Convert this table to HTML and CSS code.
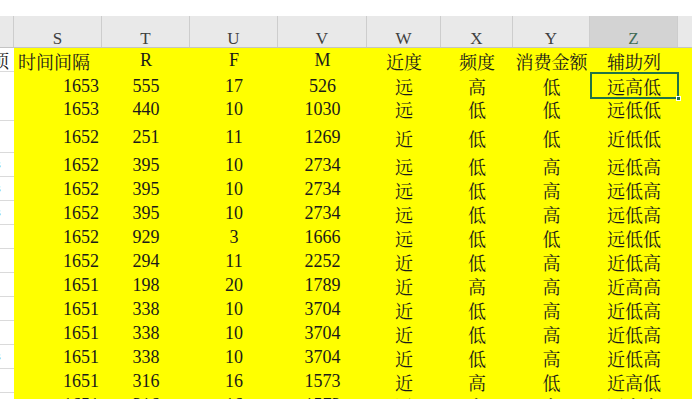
FILE: index.html
```html
<!DOCTYPE html>
<html lang="zh">
<head>
<meta charset="utf-8">
<link rel="stylesheet" href="styles.css">
</head>
<body>
<div class="topbar"></div>
<div class="sheet">
  <div class="row hd">
    <div class="h"></div>
    <div class="h">S</div><div class="h">T</div><div class="h">U</div><div class="h">V</div>
    <div class="h">W</div><div class="h">X</div><div class="h">Y</div><div class="h sel">Z</div><div class="h last"></div>
  </div>
  <div class="row">
    <div class="g"><span class="clip">项</span></div>
    <div class="c l">时间间隔</div><div class="c">R</div><div class="c">F</div><div class="c">M</div>
    <div class="c">近度</div><div class="c">频度</div><div class="c">消费金额</div><div class="c">辅助列</div><div class="c"></div>
  </div>
  <div class="row">
    <div class="g"></div>
    <div class="c r">1653</div><div class="c">555</div><div class="c">17</div><div class="c">526</div>
    <div class="c">远</div><div class="c">高</div><div class="c">低</div><div class="c active">远高低</div><div class="c"></div>
  </div>
  <div class="row r25">
    <div class="g"></div>
    <div class="c r">1653</div><div class="c">440</div><div class="c">10</div><div class="c">1030</div>
    <div class="c">远</div><div class="c">低</div><div class="c">低</div><div class="c">远低低</div><div class="c"></div>
  </div>
  <div class="row tall">
    <div class="g"></div>
    <div class="c r">1652</div><div class="c">251</div><div class="c">11</div><div class="c">1269</div>
    <div class="c">近</div><div class="c">低</div><div class="c">低</div><div class="c">近低低</div><div class="c"></div>
  </div>
  <div class="row">
    <div class="g"><span class="clip2">s</span></div>
    <div class="c r">1652</div><div class="c">395</div><div class="c">10</div><div class="c">2734</div>
    <div class="c">远</div><div class="c">低</div><div class="c">高</div><div class="c">远低高</div><div class="c"></div>
  </div>
  <div class="row">
    <div class="g"><span class="clip2">s</span></div>
    <div class="c r">1652</div><div class="c">395</div><div class="c">10</div><div class="c">2734</div>
    <div class="c">远</div><div class="c">低</div><div class="c">高</div><div class="c">远低高</div><div class="c"></div>
  </div>
  <div class="row">
    <div class="g"><span class="clip2">s</span></div>
    <div class="c r">1652</div><div class="c">395</div><div class="c">10</div><div class="c">2734</div>
    <div class="c">远</div><div class="c">低</div><div class="c">高</div><div class="c">远低高</div><div class="c"></div>
  </div>
  <div class="row">
    <div class="g"></div>
    <div class="c r">1652</div><div class="c">929</div><div class="c">3</div><div class="c">1666</div>
    <div class="c">远</div><div class="c">低</div><div class="c">低</div><div class="c">远低低</div><div class="c"></div>
  </div>
  <div class="row">
    <div class="g"></div>
    <div class="c r">1652</div><div class="c">294</div><div class="c">11</div><div class="c">2252</div>
    <div class="c">近</div><div class="c">低</div><div class="c">高</div><div class="c">近低高</div><div class="c"></div>
  </div>
  <div class="row">
    <div class="g"></div>
    <div class="c r">1651</div><div class="c">198</div><div class="c">20</div><div class="c">1789</div>
    <div class="c">近</div><div class="c">高</div><div class="c">高</div><div class="c">近高高</div><div class="c"></div>
  </div>
  <div class="row">
    <div class="g"></div>
    <div class="c r">1651</div><div class="c">338</div><div class="c">10</div><div class="c">3704</div>
    <div class="c">近</div><div class="c">低</div><div class="c">高</div><div class="c">近低高</div><div class="c"></div>
  </div>
  <div class="row">
    <div class="g"></div>
    <div class="c r">1651</div><div class="c">338</div><div class="c">10</div><div class="c">3704</div>
    <div class="c">近</div><div class="c">低</div><div class="c">高</div><div class="c">近低高</div><div class="c"></div>
  </div>
  <div class="row">
    <div class="g"><span class="clip2">s</span></div>
    <div class="c r">1651</div><div class="c">338</div><div class="c">10</div><div class="c">3704</div>
    <div class="c">近</div><div class="c">低</div><div class="c">高</div><div class="c">近低高</div><div class="c"></div>
  </div>
  <div class="row">
    <div class="g"></div>
    <div class="c r">1651</div><div class="c">316</div><div class="c">16</div><div class="c">1573</div>
    <div class="c">近</div><div class="c">高</div><div class="c">低</div><div class="c">近高低</div><div class="c"></div>
  </div>
  <div class="row">
    <div class="g"></div>
    <div class="c r">1651</div><div class="c">316</div><div class="c">16</div><div class="c">1573</div>
    <div class="c">近</div><div class="c">高</div><div class="c">高</div><div class="c">近高高</div><div class="c"></div>
  </div>
</div>
</body>
</html>
```
FILE: styles.css
```css
html, body {
  margin: 0;
  padding: 0;
  background: #ffffff;
  overflow: hidden;
}
body {
  width: 692px;
  height: 399px;
  font-family: "Liberation Serif", "Noto Serif CJK SC", "Noto Sans CJK SC", serif;
  color: #1a1a1a;
}
.topbar {
  height: 16px;
  background: #ffffff;
}
.sheet {
  display: flex;
  flex-direction: column;
}
.row {
  display: grid;
  grid-template-columns: 14px 88px 88px 88px 89px 74px 72px 77px 88px 1fr;
  height: 24px;
}
.row.r25 { height: 25px; }
.row.tall { height: 32px; }
.row.hd {
  height: 32px;
  background: #e9e9e9;
  border-bottom: 1px solid #c4c4c4;
  box-sizing: border-box;
}
.h {
  display: flex;
  align-items: flex-end;
  justify-content: center;
  padding-bottom: 0;
  font-size: 17px;
  line-height: 17px;
  color: #404040;
  border-right: 1px solid #cdcdcd;
  box-sizing: border-box;
}
.h.last { border-right: none; }
.h.sel {
  background: #d3d3d3;
  color: #3f6b55;
}
.g {
  background: #ffffff;
  border-bottom: 1px solid #dadada;
  box-sizing: border-box;
  display: flex;
  align-items: center;
  justify-content: flex-start;
  overflow: hidden;
  font-size: 18px;
  white-space: nowrap;
}
.clip { margin-left: -9px; color: #1a1a1a; flex: none; }
.clip2 { margin-left: -4px; color: #4f8a9a; font-size: 12px; flex: none; }
.c {
  background: #ffff00;
  display: flex;
  align-items: center;
  justify-content: center;
  padding-top: 1px;
  box-sizing: border-box;
  font-size: 18px;
  white-space: nowrap;
  overflow: hidden;
}
.c.r { justify-content: flex-end; padding-right: 3px; }
.c.l { justify-content: flex-start; padding-left: 4px; }
.c.active {
  position: relative;
  overflow: visible;
}
.c.active::after {
  content: "";
  position: absolute;
  left: 0;
  top: 0;
  right: -1px;
  bottom: 0;
  border: 2px solid #217346;
  box-sizing: border-box;
}
.c.active::before {
  content: "";
  position: absolute;
  right: -3px;
  bottom: -2px;
  width: 5px;
  height: 5px;
  background: #217346;
  border: 1px solid #ffffff;
  box-sizing: border-box;
  z-index: 2;
}
```
